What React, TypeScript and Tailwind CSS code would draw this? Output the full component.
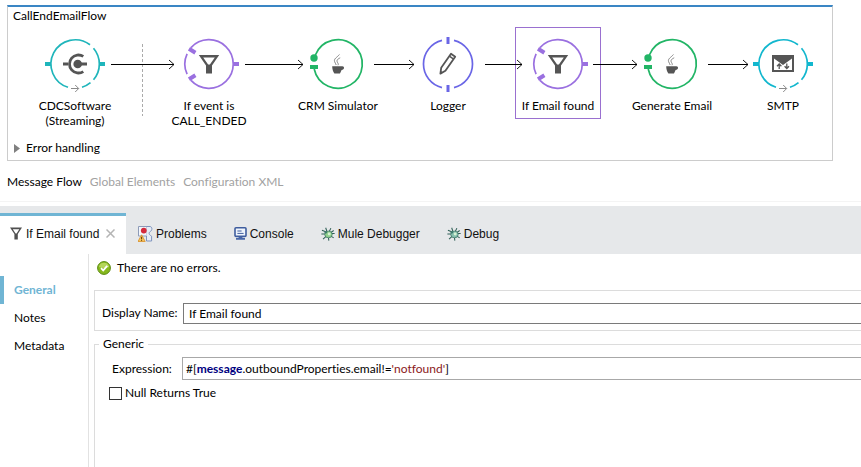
import { useState } from "react";
import type { ReactNode } from "react";

const TEAL = "#1fb5bb";
const CYAN = "#12b7ce";
const PURPLE = "#9a70e0";
const GREEN = "#22b566";
const INDIGO = "#6a66e6";
const INK = "#555555";

function Glyph({ children }: { children: ReactNode }) {
  return (
    <svg className="block size-[60px] shrink-0 overflow-visible" viewBox="-30 -30 60 60" fill="none" aria-hidden="true">
      {children}
    </svg>
  );
}

function ConnectorRing({ color }: { color: string }) {
  return (
    <>
      <g stroke={color} strokeWidth="1.7">
        <path d="M-7 23.3A24.3 24.3 0 1 1 15 -19.2" />
        <path d="M18.5 -15.8A24.3 24.3 0 0 1 18.5 15.8" />
        <path d="M15.5 18.7A24.3 24.3 0 0 1 7 23.3" />
      </g>
      <path d="M-30 -2h6v4h-6zM24 -2h6v4h-6z" fill={color} />
      <path d="M-4 24.5H3.6M0.2 21L3.7 24.5L0.2 28" stroke="#8a8a8a" strokeWidth="1" />
    </>
  );
}

function CdcGlyph() {
  return (
    <Glyph>
      <ConnectorRing color={TEAL} />
      <circle cx="2.7" cy="0" r="4.3" fill={INK} />
      <path d="M2.7 0H12M-12 0H-7" stroke={INK} strokeWidth="3" />
      <path d="M8.3 -7.6A9 9 0 1 0 8.3 7.6" stroke={INK} strokeWidth="2.8" />
    </Glyph>
  );
}

function MailGlyph() {
  return (
    <Glyph>
      <ConnectorRing color={CYAN} />
      <path d="M-11 -9H11V8H-11Z" fill={INK} />
      <path d="M-9 -5.6L0 1L9 -5.6V6H-9Z" fill="#ffffff" />
      <path d="M-3.8 5V-0.5M-6 2.2L-3.8 0L-1.6 2.2M3.8 -0.5V4.5M1.6 2.2L3.8 4.5L6 2.2" stroke={INK} strokeWidth="1.3" />
    </Glyph>
  );
}

function FilterGlyph() {
  return (
    <Glyph>
      <g stroke={PURPLE} strokeWidth="1.7">
        <path d="M-18 -16.4A24.3 24.3 0 1 1 -18 16.4" />
        <path d="M-21.9 -10.2A24.3 24.3 0 0 0 -21.9 10.2" />
      </g>
      <path d="M-20 -15.2L-13.6 -11.2M-20 15.2L-13.6 11.2" stroke={PURPLE} strokeWidth="4" />
      <path d="M24 -2h6v4h-6z" fill={PURPLE} />
      <path d="M-10.2 -9H10.2L3 1.6V9.5H-3V1.6ZM-5.8 -6.6L-0.9 0.6H0.9L5.8 -6.6Z" fill={INK} fillRule="evenodd" />
    </Glyph>
  );
}

function JavaGlyph() {
  return (
    <Glyph>
      <path d="M-22.6 -9A24.3 24.3 0 1 1 -23.8 5" stroke={GREEN} strokeWidth="1.7" />
      <circle cx="-24" cy="-6" r="3.7" fill={GREEN} />
      <path d="M-28 1h8v4h-8z" fill={GREEN} />
      <path d="M-5.8 2.2H4.4C6.6 2.2 6.8 5.6 3.6 6L2 9.4H-3.6C-5 7.8 -5.8 5 -5.8 2.2Z" fill={INK} />
      <path d="M1.4 -9.5C-1 -6.4 -4.4 -5.4 -3.4 -2.4C-3 -1.2 -2.2 -0.2 -1.8 1M2.2 -6.2C-0.6 -4.8 -1.8 -3.6 -0.4 -1.4C0.4 -0.2 0.4 0.4 0 1.2" stroke="#777777" strokeWidth="0.9" />
    </Glyph>
  );
}

function LoggerGlyph() {
  return (
    <Glyph>
      <g stroke={INDIGO} strokeWidth="1.7">
        <path d="M-6 -23.6A24.3 24.3 0 0 0 -6 23.6" />
        <path d="M6 -23.6A24.3 24.3 0 0 1 6 23.6" />
      </g>
      <path d="M-1.5 -27h3v7h-3zM-1.5 21h3v7h-3z" fill={INDIGO} />
      <path d="M-7.6 9.6L-6.8 3.8L3 -10.2L7.2 -7.2L-2.6 6.8Z" stroke={INK} strokeWidth="1.8" strokeLinejoin="round" />
      <path d="M1.4 -7.8L5.6 -4.9" stroke={INK} strokeWidth="1.4" />
      <path d="M-7.8 10L-7.4 6.8L-5 8.4Z" fill={INK} />
    </Glyph>
  );
}

type FlowNode = { id: string; lines: string[]; place: string; glyph: ReactNode };

const NODES: FlowNode[] = [
  { id: "cdc", lines: ["CDCSoftware", "(Streaming)"], place: "left-[24px]", glyph: <CdcGlyph /> },
  { id: "event", lines: ["If event is", "CALL_ENDED"], place: "left-[158px]", glyph: <FilterGlyph /> },
  { id: "crm", lines: ["CRM Simulator"], place: "left-[287px]", glyph: <JavaGlyph /> },
  { id: "logger", lines: ["Logger"], place: "left-[397px]", glyph: <LoggerGlyph /> },
  { id: "email", lines: ["If Email found"], place: "left-[507px]", glyph: <FilterGlyph /> },
  { id: "generate", lines: ["Generate Email"], place: "left-[621px]", glyph: <JavaGlyph /> },
  { id: "smtp", lines: ["SMTP"], place: "left-[732px]", glyph: <MailGlyph /> },
];

const WIRES: [number, number][] = [
  [103, 166],
  [237, 295],
  [366, 406],
  [477, 514],
  [585, 629],
  [700, 740],
];

function FlowCanvas() {
  const [selected, setSelected] = useState("email");
  return (
    <section className="mt-[5px] mr-7 ml-[7px] border border-t-2 border-[#cccccc] border-t-[#3a86c4] pb-0.5">
      <h1 className="h-[18px] pl-[5px] text-xs leading-[18px]">CallEndEmailFlow</h1>
      <div className="relative h-[113px]">
        {NODES.map((n) => (
          <button
            key={n.id}
            type="button"
            onClick={() => setSelected(n.id)}
            className={`absolute top-[2px] flex min-h-[92px] w-[86px] flex-col items-center border pt-[6px] ${n.place} ${
              selected === n.id ? "border-[#9a70d0]" : "border-transparent"
            }`}
          >
            {n.glyph}
            <span className="mt-1 flex flex-col text-center text-xs leading-[15px] whitespace-nowrap">
              {n.lines.map((l) => (
                <span key={l}>{l}</span>
              ))}
            </span>
          </button>
        ))}
        <svg className="pointer-events-none absolute top-0 left-0 h-[113px] w-[780px]" viewBox="0 0 780 113" fill="none" aria-hidden="true">
          <path d="M134.5 19V91" stroke="#aaaaaa" strokeDasharray="3 2" />
          {WIRES.map(([a, b]) => (
            <g key={a} stroke="#000000">
              <path d={`M${a} 39.5H${b}`} />
              <path d={`M${b - 5} 35L${b} 39.5L${b - 5} 44`} strokeWidth="0.9" />
            </g>
          ))}
        </svg>
      </div>
      <button type="button" className="flex h-5 items-center gap-[6px] pl-[6px] text-xs leading-5">
        <svg className="h-[9px] w-[6px]" viewBox="0 0 6 9" aria-hidden="true">
          <path d="M0 0L6 4.5L0 9Z" fill="#808080" />
        </svg>
        Error handling
      </button>
    </section>
  );
}

function FunnelIcon() {
  return (
    <svg className="h-[13px] w-3" viewBox="0 0 12 13" aria-hidden="true">
      <path d="M0 0.5H12L7.8 7V12.5H4.4V7ZM2.8 2.2L5.6 6.4H6.6L9.3 2.2Z" fill="#505050" fillRule="evenodd" />
    </svg>
  );
}

function CloseIcon() {
  return (
    <svg className="size-[9px]" viewBox="0 0 9 9" fill="none" aria-hidden="true">
      <path d="M0.5 0.5L8.5 8.5M8.5 0.5L0.5 8.5" stroke="#b4b4b4" strokeWidth="1.5" />
    </svg>
  );
}

function ProblemsIcon() {
  return (
    <svg className="h-4 w-[15px]" viewBox="0 0 15 16" fill="none" aria-hidden="true">
      <path d="M0.5 0.5H9V10H0.5Z" fill="#f4f6fb" stroke="#8d9bb8" />
      <path d="M9 0.5H12C14.6 1 14.4 4.4 12.2 5.6C10.6 6.6 10.6 8.6 13.6 10.2V15H8.5V10" fill="#e6ecf6" stroke="#7e93bd" />
      <circle cx="5.8" cy="4.6" r="2.9" fill="#d42a3c" />
      <path d="M3.6 8.8L7.2 15.5H0Z" fill="#f7c35a" stroke="#d9912a" strokeWidth="0.8" />
      <path d="M3.6 10.8V13.2M3.6 13.8V14.8" stroke="#5b3a08" />
    </svg>
  );
}

function ConsoleIcon() {
  return (
    <svg className="size-[13px]" viewBox="0 0 13 13" fill="none" aria-hidden="true">
      <rect x="1" y="0.8" width="11" height="8.6" rx="1" fill="#eef4fc" stroke="#3f5d9e" strokeWidth="1.6" />
      <path d="M3.4 4H7.6M3.4 6.4H9.6" stroke="#3f5d9e" />
      <path d="M4.6 9.8H8.4V11H11V12.8H2V11H4.6Z" fill="#4766a8" />
    </svg>
  );
}

function BugIcon({ tint }: { tint: string }) {
  return (
    <svg className="size-[14px]" viewBox="0 0 15 15" fill="none" aria-hidden="true">
      <path
        d="M5 5L1 3.4M4.4 7.6H0.4M5.4 10L2.2 13M6.4 4.8L5 0.8M9 4.6L10.6 1.2M11 7H14.6M11 5.6L13.6 3.8M10.6 9.8L13.6 11.6M8 11.4L8.4 14.6"
        stroke="#2f5f56"
        strokeWidth="1.1"
      />
      <ellipse cx="8" cy="8" rx="4" ry="3.6" fill={tint} stroke="#3c7464" strokeWidth="0.8" />
      <circle cx="5.2" cy="5.6" r="1.4" fill="#3d7a6d" />
      <circle cx="8.8" cy="7.4" r="1.6" fill="#d6f2d4" />
    </svg>
  );
}

function OkIcon() {
  return (
    <svg className="size-[14px]" viewBox="0 0 14 14" fill="none" aria-hidden="true">
      <circle cx="7" cy="7" r="6.4" fill="#86b81c" stroke="#5b8a12" />
      <path d="M1.8 6A5.3 5.3 0 0 1 12.2 6C9 7.4 5 7.4 1.8 6Z" fill="#b4d65a" />
      <path d="M4 7.2L6.2 9.4L10.2 4.8" stroke="#ffffff" strokeWidth="1.8" />
    </svg>
  );
}

function EditorTabs() {
  const [page, setPage] = useState("Message Flow");
  return (
    <nav className="flex h-[41px] gap-2 border-b border-[#f4f4f4] pl-[7px] text-xs">
      {["Message Flow", "Global Elements", "Configuration XML"].map((t) => (
        <button
          key={t}
          type="button"
          onClick={() => setPage(t)}
          className={`h-[41px] ${page === t ? "text-black" : "text-[#a2a2a2]"}`}
        >
          {t}
        </button>
      ))}
    </nav>
  );
}

function ViewTabs() {
  const tab = "flex h-[41px] items-center gap-[3px]";
  return (
    <nav className="mt-1 flex h-12 items-end bg-[#e6e8ea] font-['Liberation_Sans',Arial,sans-serif] text-xs text-[#111111]">
      <div className="flex h-[41px] w-[126px] items-center gap-[7px] border-t-[3px] border-[#70b5d4] bg-white pb-[3px] pl-[10px] whitespace-nowrap">
        <button type="button" className="flex items-center gap-1">
          <FunnelIcon />
          If Email found
        </button>
        <button type="button" aria-label="Close">
          <CloseIcon />
        </button>
      </div>
      <div className="flex gap-[27px] pl-3">
        <button type="button" className={tab}>
          <ProblemsIcon />
          Problems
        </button>
        <button type="button" className={tab}>
          <ConsoleIcon />
          Console
        </button>
        <button type="button" className={tab}>
          <BugIcon tint="#8fd08c" />
          Mule Debugger
        </button>
        <button type="button" className={tab}>
          <BugIcon tint="#86bfae" />
          Debug
        </button>
      </div>
    </nav>
  );
}

function Sidebar() {
  const [section, setSection] = useState("General");
  return (
    <aside className="flex w-[89px] shrink-0 flex-col border-r border-[#e2e2e2] pt-[22px]">
      {["General", "Notes", "Metadata"].map((s) => (
        <button
          key={s}
          type="button"
          onClick={() => setSection(s)}
          className={`h-7 border-l-4 pl-[10px] text-left text-xs ${
            section === s ? "border-[#70b5d4] font-bold text-[#70b5d4]" : "border-transparent"
          }`}
        >
          {s}
        </button>
      ))}
    </aside>
  );
}

function Properties() {
  const [name, setName] = useState("If Email found");
  const [expression, setExpression] = useState("#[message.outboundProperties.email!='notfound']");
  const [nullTrue, setNullTrue] = useState(false);
  const tokens = expression.split(/(\bmessage\b|'[^']*')/);
  return (
    <main className="flex min-w-0 grow flex-col pl-[5px] text-xs">
      <p className="flex h-7 items-center gap-[6px] pl-[3px]">
        <OkIcon />
        There are no errors.
      </p>
      <div className="mt-2 flex h-[41px] items-center border border-r-0 border-[#dcdcdc] pt-[5px] pl-[7px]">
        <label htmlFor="display-name" className="w-[81px] shrink-0 whitespace-nowrap">
          Display Name:
        </label>
        <input
          id="display-name"
          value={name}
          onChange={(e) => setName(e.target.value)}
          className="h-[21px] min-w-0 grow border border-r-0 border-[#7a7a7a] px-[5px] outline-none"
        />
      </div>
      <fieldset className="mt-1 grow border border-r-0 border-b-0 border-[#dcdcdc]">
        <legend className="ml-[4px] px-1 leading-[18px]">Generic</legend>
        <div className="mt-1 flex h-[23px] items-center pl-[17px]">
          <label htmlFor="expression" className="w-[70px] shrink-0 whitespace-nowrap">
            Expression:
          </label>
          <div className="relative h-[23px] min-w-0 grow border border-r-0 border-[#a8a8a8]">
            <div aria-hidden="true" className="px-[3px] leading-[21px] whitespace-pre">
              {tokens.map((t, i) => (
                <span key={i} className={t === "message" ? "font-bold text-[#000080]" : t.startsWith("'") ? "text-[#8b1a1a]" : ""}>
                  {t}
                </span>
              ))}
            </div>
            <input
              id="expression"
              value={expression}
              onChange={(e) => setExpression(e.target.value)}
              className="absolute inset-0 w-full px-[3px] text-transparent caret-black outline-none"
            />
          </div>
        </div>
        <label className="mt-1 flex h-[18px] items-center gap-[3px] pl-[14px]">
          <input
            type="checkbox"
            checked={nullTrue}
            onChange={(e) => setNullTrue(e.target.checked)}
            className="size-[13px] appearance-none border border-[#333333] bg-white checked:bg-[#333333]"
          />
          Null Returns True
        </label>
      </fieldset>
    </main>
  );
}

export default function App() {
  return (
    <div className="flex min-h-screen flex-col bg-white font-['Lato','Open_Sans',sans-serif] text-black [font-variant-ligatures:none]">
      <FlowCanvas />
      <EditorTabs />
      <ViewTabs />
      <div className="flex grow">
        <Sidebar />
        <Properties />
      </div>
    </div>
  );
}
